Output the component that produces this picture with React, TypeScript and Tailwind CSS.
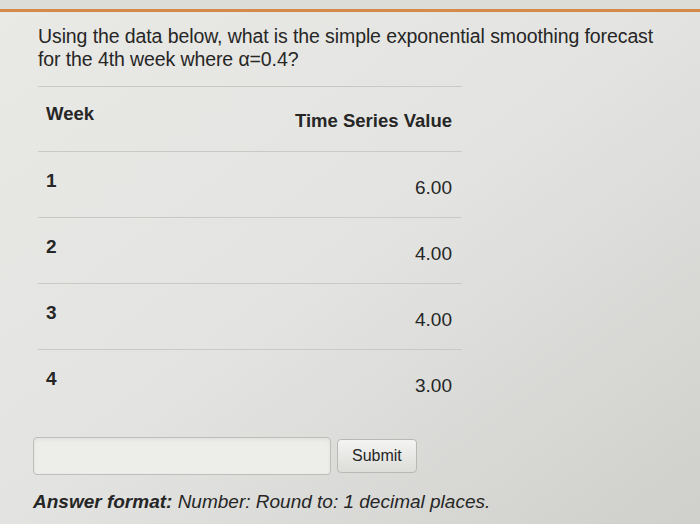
export default function App() {
  const rows = [
    { week: '1', value: '6.00' },
    { week: '2', value: '4.00' },
    { week: '3', value: '4.00' },
    { week: '4', value: '3.00' },
  ];

  return (
    <div
      className="w-[700px] h-[524px] overflow-hidden bg-gradient-to-br from-[#e9e9e6] via-[#e3e4e1] to-[#cfcfcc] text-[#262626]"
      style={{ fontFamily: '"Liberation Sans", Arial, sans-serif' }}
    >
      {/* top orange rule */}
      <div className="h-[9px] bg-[#dcdcd8]" />
      <div className="h-[3px] bg-[#d58a4a]" />

      <div className="pl-[38px] pr-4 pt-[13px]">
        <p className="text-[19.5px] leading-[23px] w-[622px] tracking-[-0.1px]">
          Using the data below, what is the simple exponential smoothing forecast for the 4th week where α=0.4?
        </p>

        {/* data table */}
        <div className="mt-[15px] w-[424px] border-t border-[#c9cac6]">
          <div className="flex h-[65px] items-start pt-[13px] border-b border-[#c9cac6] text-[18.5px] font-bold">
            <div className="flex-1 pl-[8px]">Week</div>
            <div className="pr-[10px] pt-[7px]">Time Series Value</div>
          </div>
          {rows.map((r, i) => (
            <div
              key={r.week}
              className={`flex h-[66px] items-start pt-[15px] text-[19px] ${i < rows.length - 1 ? 'border-b border-[#c9cac6]' : ''}`}
            >
              <div className="flex-1 pl-[8px] font-bold">{r.week}</div>
              <div className="pr-[10px] pt-[7px]">{r.value}</div>
            </div>
          ))}
        </div>
      </div>

      {/* answer input */}
      <div className="pl-[33px] mt-[21px] flex items-center gap-[6px]">
        <input
          type="text"
          className="w-[298px] h-[38px] bg-[#ededea] border border-[#bdbdb9] rounded-[4px] shadow-inner"
        />
        <button className="h-[34px] px-[14px] text-[16px] bg-gradient-to-b from-[#f4f4f2] to-[#dcdcd9] border border-[#b8b8b4] rounded-[4px]">
          Submit
        </button>
      </div>
      <p className="pl-[33px] mt-[13px] text-[19px] italic">
        <span className="font-bold">Answer format:</span> Number: Round to: 1 decimal places.
      </p>
    </div>
  );
}
